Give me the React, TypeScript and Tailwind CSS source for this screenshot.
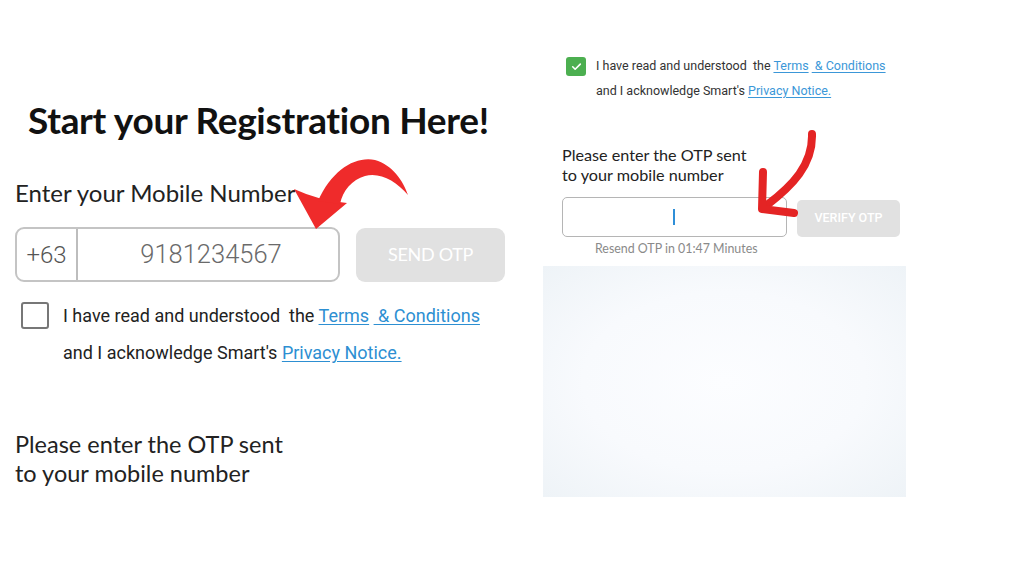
import React from "react";

const lato = { fontFamily: "Lato, 'Noto Sans', sans-serif" };
const roboto = { fontFamily: "Roboto, 'Noto Sans', sans-serif" };

export default function App() {
  return (
    <div className="relative w-[1024px] h-[576px] overflow-hidden bg-white flex">
      {/* Left column */}
      <div className="w-[543px] shrink-0 flex flex-col pl-[15px]">
        <h1
          className="mt-[101px] ml-[13px] text-[37px] leading-[37px] font-bold text-[#111] tracking-[-0.3px] whitespace-nowrap"
          style={lato}
        >
          Start your Registration Here!
        </h1>
        <div className="mt-[43px] text-[24px] leading-[24px] text-[#222]" style={lato}>
          Enter your Mobile Number
        </div>
        <div className="mt-[22px] flex items-center gap-[16px]">
          <div className="w-[325px] h-[55px] flex rounded-[9px] border-2 border-[#c4c4c4] overflow-hidden">
            <div
              className="w-[61px] flex items-center justify-center border-r-2 border-[#bdbdbd] text-[24px] font-light text-[#555]"
              style={roboto}
            >
              +63
            </div>
            <div
              className="flex-1 flex items-center justify-center text-[25.5px] font-light text-[#6a6a6a] pl-[6px]"
              style={roboto}
            >
              9181234567
            </div>
          </div>
          <div
            className="w-[149px] h-[54px] rounded-[9px] bg-[#e1e1e1] flex items-center justify-center text-white text-[18px] tracking-[-0.3px]"
            style={lato}
          >
            SEND OTP
          </div>
        </div>
        <div className="mt-[15px] flex">
          <div className="ml-[6px] mt-[5px] w-[28px] h-[27px] rounded-[3px] border-2 border-[#777] shrink-0" />
          <div className="ml-[14px] text-[18px] leading-[37px] text-[#222]" style={roboto}>
            <div className="whitespace-nowrap">
              I have read and understood&nbsp; the{" "}
              <span className="text-[#2d8fd2] underline underline-offset-2">Terms</span>{" "}
              <span className="text-[#2d8fd2] underline underline-offset-2">&nbsp;&amp; Conditions</span>
            </div>
            <div className="whitespace-nowrap">
              and I acknowledge Smart's{" "}
              <span className="text-[#2d8fd2] underline underline-offset-2">Privacy Notice.</span>
            </div>
          </div>
        </div>
        <div className="mt-[59px] text-[23.5px] leading-[29px] text-[#222]" style={lato}>
          <div>Please enter the OTP sent</div>
          <div>to your mobile number</div>
        </div>
      </div>

      {/* Right column */}
      <div className="flex-1 flex flex-col">
        <div className="mt-[53px] pl-[23px] flex">
          <div className="mt-[4px] w-[20px] h-[19px] rounded-[3px] bg-[#4caf50] flex items-center justify-center shrink-0">
            <svg width="13" height="13" viewBox="0 0 24 24" fill="none" stroke="white" strokeWidth="3" strokeLinecap="round" strokeLinejoin="round">
              <path d="M5 12.5l4.5 4.5L19 7.5" />
            </svg>
          </div>
          <div className="ml-[10px] text-[12.5px] leading-[25px] text-[#333]" style={roboto}>
            <div className="whitespace-nowrap">
              I have read and understood&nbsp; the{" "}
              <span className="text-[#3b97d8] underline underline-offset-2">Terms</span>{" "}
              <span className="text-[#3b97d8] underline underline-offset-2">&nbsp;&amp; Conditions</span>
            </div>
            <div className="whitespace-nowrap">
              and I acknowledge Smart's{" "}
              <span className="text-[#3b97d8] underline underline-offset-2">Privacy Notice.</span>
            </div>
          </div>
        </div>
        <div className="mt-[42px] pl-[19px] text-[16.2px] leading-[20px] text-[#222]" style={lato}>
          <div>Please enter the OTP sent</div>
          <div>to your mobile number</div>
        </div>
        <div className="mt-[12px] pl-[19px] flex items-end gap-[10px]">
          <div className="w-[225px] h-[40px] rounded-[5px] border border-[#b5b5b5] flex items-center justify-center">
            <div className="w-[2px] h-[16px] bg-[#2f8fd8] ml-[-2px]" />
          </div>
          <div
            className="w-[103px] h-[37px] rounded-[5px] bg-[#e1e1e1] flex items-center justify-center text-white text-[12.5px] font-medium"
            style={roboto}
          >
            VERIFY OTP
          </div>
        </div>
        <div className="mt-[5px] pl-[52px] text-[12.4px] leading-[14px] text-[#8a8a8a]" style={lato}>
          Resend OTP in 01:47 Minutes
        </div>
        <div className="mt-[10px] w-[363px] h-[231px] bg-[radial-gradient(ellipse_at_center,#fcfdff_0%,#f8fafd_55%,#eef3f7_100%)]" />
      </div>

      {/* Arrows overlay */}
      <svg className="absolute inset-0 pointer-events-none" width="1024" height="576" viewBox="0 0 1024 576">
        <path d="M294,189 L316,229 L347,203 Q 320,201 294,189 Z" fill="#ef2b2b" />
        <path
          d="M318,201 C 332,170 355,156 375,160 C 392,165 403,180 408,195 C 396,181 380,172 365,176 C 352,180 343,190 340,204 Z"
          fill="#ef2b2b"
        />
        <g fill="none" stroke="#e42424" strokeWidth="8" strokeLinecap="round" strokeLinejoin="round">
          <path d="M812,134 C 813,165 792,186 767,205" />
          <path d="M763,172 L762,209 L794,213" />
        </g>
      </svg>
    </div>
  );
}
